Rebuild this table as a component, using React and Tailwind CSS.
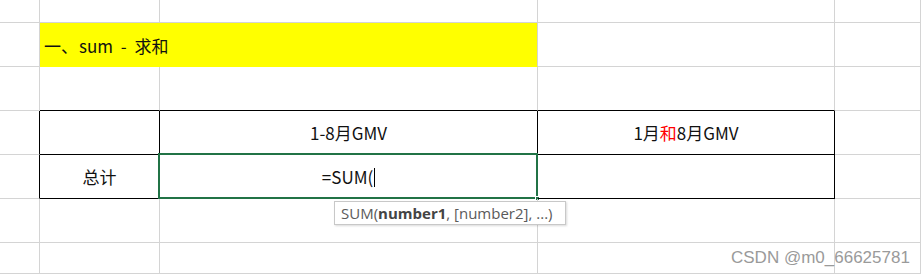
const line = 'border-[#d4d4d4]'

function Cell({ className = '', children }) {
  return (
    <div className={`relative flex items-center border-r border-b ${className}`}>
      {children}
    </div>
  )
}

export default function App() {
  return (
    <div
      className="relative h-[274px] w-[921px] overflow-hidden bg-white text-[17px] text-[#111]"
      style={{ fontFamily: '"Noto Sans CJK SC", "Liberation Sans", sans-serif' }}
    >
      <div className="grid h-full grid-cols-[40px_120px_378px_297px_1fr] grid-rows-[23px_44px_44px_44px_44px_44px_1fr]">
        {/* row 0 */}
        <Cell className={line} />
        <Cell className={line} />
        <Cell className={line} />
        <Cell className={line} />
        <Cell className={line} />

        {/* row 1: title */}
        <Cell className={line} />
        <div className="col-span-2 -ml-px -mt-px flex items-center whitespace-pre border-r border-b border-r-[#d4d4d4] border-b-[#ffff00] bg-[#ffff00] pl-[5px] pt-[3px] [word-spacing:4px]">
          <span className="inline-block w-[35px]">一、</span>sum - 求和
        </div>
        <Cell className={line} />
        <Cell className={line} />

        {/* row 2 */}
        <Cell className={line} />
        <Cell className="border-r-[#d4d4d4] border-b-black" />
        <Cell className="border-r-[#d4d4d4] border-b-black" />
        <Cell className="border-r-[#d4d4d4] border-b-black" />
        <Cell className={line} />

        {/* row 3: header */}
        <Cell className="border-r-black border-b-[#d4d4d4]" />
        <Cell className="border-black" />
        <Cell className="justify-center border-black pt-[1px]">1-8月GMV</Cell>
        <Cell className="justify-center border-black pt-[1px]">
          1月<span className="text-[#ff0000]">和</span>8月GMV
        </Cell>
        <Cell className={line} />

        {/* row 4: total */}
        <Cell className="border-r-black border-b-[#d4d4d4]" />
        <Cell className="justify-center border-black pt-[1px]">总计</Cell>
        <Cell className="justify-center border-black pt-[1px]">
          =SUM(<span className="ml-px inline-block h-[19px] w-px bg-black" />
          <div className="absolute -top-[2px] -left-[2px] -right-px -bottom-px border-2 border-[#217346]" />
          <div className="absolute -right-[3px] -bottom-[3px] h-[5px] w-[5px] border border-white bg-[#217346]" />
        </Cell>
        <Cell className="border-black" />
        <Cell className={line} />

        {/* row 5 */}
        <Cell className={line} />
        <Cell className={line} />
        <Cell className={line} />
        <Cell className={line} />
        <Cell className={line} />

        {/* row 6 */}
        <Cell className={line} />
        <Cell className={line} />
        <Cell className={line} />
        <Cell className={line} />
        <Cell className={line} />
      </div>

      {/* function tooltip */}
      <div
        className="absolute left-[334px] top-[201px] flex h-[24px] w-[232px] items-center whitespace-nowrap border border-[#c8c8c8] bg-white pl-[6px] text-[15px] text-[#5a5a5a] shadow-[1px_1px_2px_rgba(0,0,0,0.15)]"
        style={{ fontFamily: '"Open Sans", "Liberation Sans", sans-serif' }}
      >
        SUM(<b className="font-bold text-[#444]">number1</b>, [number2], ...)
      </div>

      {/* watermark */}
      <div
        className="absolute left-[731px] top-[245px] text-[17px] text-[#9a9a9a] [text-shadow:0_0_1px_#fff]"
        style={{ fontFamily: '"Liberation Sans", sans-serif' }}
      >
        CSDN @m0_66625781
      </div>
    </div>
  )
}
